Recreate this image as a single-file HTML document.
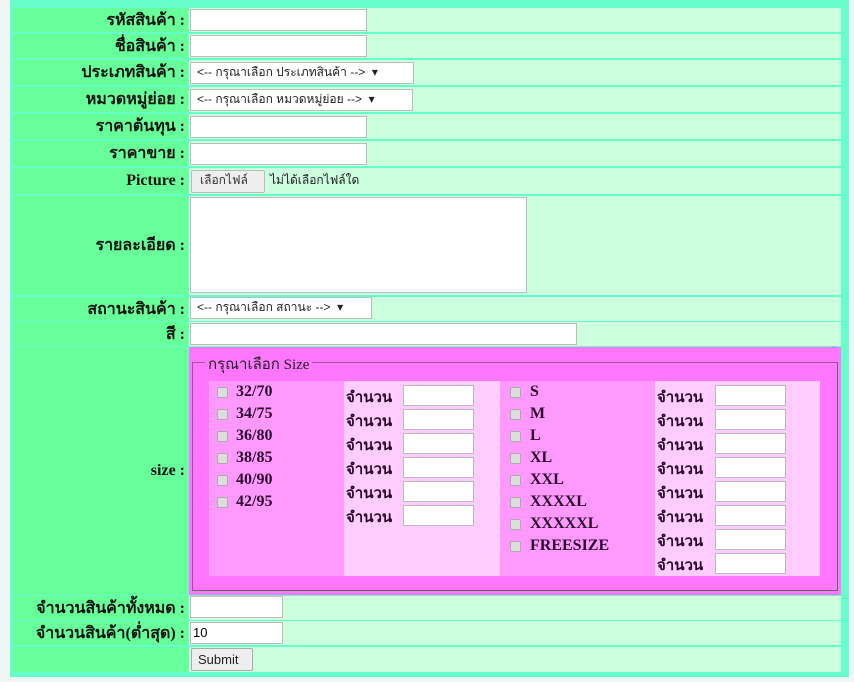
<!DOCTYPE html>
<html><head><meta charset="utf-8"><style>
*{box-sizing:border-box;margin:0;padding:0}
body{width:854px;height:682px;background:#eef6f6;position:relative;overflow:hidden;font-family:"Liberation Serif",serif;}
#outer{position:absolute;left:10px;top:0;width:839px;height:677px;background:#66ffcc}
.l{position:absolute;left:13px;width:175px;background:#66ff99;text-align:right;font-weight:bold;font-size:16px;color:#111;padding-right:3px;display:flex;align-items:center;justify-content:flex-end;white-space:nowrap}
.v{position:absolute;left:189px;width:652px;background:#ccffdd}
.in{position:absolute;background:#fff;border:1px solid #bbb;height:22px}
.sel{position:absolute;background:#fff;border:1px solid #bbb;height:22px;font-family:"Liberation Sans",sans-serif;font-size:12px;line-height:18px;color:#222;padding:0 6px;white-space:nowrap}
.t{position:absolute;font-size:16px;font-weight:bold;color:#2a0a2a;white-space:nowrap}
.j{font-size:15px}
.cb{position:absolute;width:11px;height:11px;background:#ddd;border:1px solid #aaa;border-radius:2px}
.s{position:absolute;background:#fff;border:1px solid #bbb;width:71px;height:21px}
</style></head><body>
<div id="outer"></div>

<div class="l" style="top:8px;height:24px">รหัสสินค้า :</div><div class="v" style="top:8px;height:24px"></div>
<div class="in" style="left:190px;top:9px;width:177px"></div>
<div class="l" style="top:34px;height:24px">ชื่อสินค้า :</div><div class="v" style="top:34px;height:24px"></div>
<div class="in" style="left:190px;top:35px;width:177px"></div>
<div class="l" style="top:60px;height:25px">ประเภทสินค้า :</div><div class="v" style="top:60px;height:25px"></div>
<div class="sel" style="left:190px;top:62px;width:224px">&lt;-- กรุณาเลือก ประเภทสินค้า --&gt; &nbsp;▾</div>
<div class="l" style="top:87px;height:25px">หมวดหมู่ย่อย :</div><div class="v" style="top:87px;height:25px"></div>
<div class="sel" style="left:190px;top:89px;width:223px">&lt;-- กรุณาเลือก หมวดหมู่ย่อย --&gt; &nbsp;▾</div>
<div class="l" style="top:114px;height:25px">ราคาต้นทุน :</div><div class="v" style="top:114px;height:25px"></div>
<div class="in" style="left:190px;top:116px;width:177px"></div>
<div class="l" style="top:141px;height:25px">ราคาขาย :</div><div class="v" style="top:141px;height:25px"></div>
<div class="in" style="left:190px;top:143px;width:177px"></div>
<div class="l" style="top:168px;height:26px">Picture :</div><div class="v" style="top:168px;height:26px"></div>
<div style="position:absolute;left:191px;top:170px;width:74px;height:23px;background:#eee;border:1px solid #bbb;border-radius:2px;font-family:'Liberation Sans',sans-serif;font-size:12px;line-height:19px;padding:0 8px;color:#333">เลือกไฟล์</div>
<div style="position:absolute;left:270px;top:171px;font-family:'Liberation Sans',sans-serif;font-size:12px;line-height:19px;color:#222">ไม่ได้เลือกไฟล์ใด</div>
<div class="l" style="top:196px;height:99px">รายละเอียด :</div><div class="v" style="top:196px;height:99px"></div>
<div class="in" style="left:190px;top:197px;width:337px;height:96px"></div>
<div class="l" style="top:297px;height:24px">สถานะสินค้า :</div><div class="v" style="top:297px;height:24px"></div>
<div class="sel" style="left:190px;top:297px;width:182px">&lt;-- กรุณาเลือก สถานะ --&gt; &nbsp;▾</div>
<div class="l" style="top:322px;height:24px">สี :</div><div class="v" style="top:322px;height:24px"></div>
<div class="in" style="left:190px;top:323px;width:387px"></div>
<div class="l" style="top:347px;height:248px">size :</div>
<div class="v" style="top:347px;height:248px;background:#ff77ff"></div>
<div style="position:absolute;left:192px;top:362px;width:646px;height:229px;border:1px solid #a050a0;border-right-color:#666;border-bottom-color:#666"></div>
<div style="position:absolute;left:205px;top:352px;padding:0 3px;background:#ff77ff;font-size:15px;color:#222">กรุณาเลือก Size</div>
<div style="position:absolute;left:209px;top:381px;width:611px;height:195px;background:#ff99ff"></div>
<div style="position:absolute;left:344px;top:381px;width:156px;height:195px;background:#ffccff"></div>
<div style="position:absolute;left:655px;top:381px;width:165px;height:195px;background:#ffccff"></div>

<div class="cb" style="left:217px;top:387px"></div><div class="t" style="left:236px;top:383px">32/70</div>
<div class="cb" style="left:217px;top:409px"></div><div class="t" style="left:236px;top:405px">34/75</div>
<div class="cb" style="left:217px;top:431px"></div><div class="t" style="left:236px;top:427px">36/80</div>
<div class="cb" style="left:217px;top:453px"></div><div class="t" style="left:236px;top:449px">38/85</div>
<div class="cb" style="left:217px;top:475px"></div><div class="t" style="left:236px;top:471px">40/90</div>
<div class="cb" style="left:217px;top:497px"></div><div class="t" style="left:236px;top:493px">42/95</div>

<div class="t j" style="left:346px;top:385px">จำนวน</div><div class="s" style="left:403px;top:385px"></div>
<div class="t j" style="left:346px;top:409px">จำนวน</div><div class="s" style="left:403px;top:409px"></div>
<div class="t j" style="left:346px;top:433px">จำนวน</div><div class="s" style="left:403px;top:433px"></div>
<div class="t j" style="left:346px;top:457px">จำนวน</div><div class="s" style="left:403px;top:457px"></div>
<div class="t j" style="left:346px;top:481px">จำนวน</div><div class="s" style="left:403px;top:481px"></div>
<div class="t j" style="left:346px;top:505px">จำนวน</div><div class="s" style="left:403px;top:505px"></div>

<div class="cb" style="left:510px;top:387px"></div><div class="t" style="left:530px;top:383px">S</div>
<div class="cb" style="left:510px;top:409px"></div><div class="t" style="left:530px;top:405px">M</div>
<div class="cb" style="left:510px;top:431px"></div><div class="t" style="left:530px;top:427px">L</div>
<div class="cb" style="left:510px;top:453px"></div><div class="t" style="left:530px;top:449px">XL</div>
<div class="cb" style="left:510px;top:475px"></div><div class="t" style="left:530px;top:471px">XXL</div>
<div class="cb" style="left:510px;top:497px"></div><div class="t" style="left:530px;top:493px">XXXXL</div>
<div class="cb" style="left:510px;top:519px"></div><div class="t" style="left:530px;top:515px">XXXXXL</div>
<div class="cb" style="left:510px;top:541px"></div><div class="t" style="left:530px;top:537px">FREESIZE</div>

<div class="t j" style="left:657px;top:385px">จำนวน</div><div class="s" style="left:715px;top:385px"></div>
<div class="t j" style="left:657px;top:409px">จำนวน</div><div class="s" style="left:715px;top:409px"></div>
<div class="t j" style="left:657px;top:433px">จำนวน</div><div class="s" style="left:715px;top:433px"></div>
<div class="t j" style="left:657px;top:457px">จำนวน</div><div class="s" style="left:715px;top:457px"></div>
<div class="t j" style="left:657px;top:481px">จำนวน</div><div class="s" style="left:715px;top:481px"></div>
<div class="t j" style="left:657px;top:505px">จำนวน</div><div class="s" style="left:715px;top:505px"></div>
<div class="t j" style="left:657px;top:529px">จำนวน</div><div class="s" style="left:715px;top:529px"></div>
<div class="t j" style="left:657px;top:553px">จำนวน</div><div class="s" style="left:715px;top:553px"></div>

<div class="l" style="top:596px;height:24px">จำนวนสินค้าทั้งหมด :</div><div class="v" style="top:596px;height:24px"></div>
<div class="in" style="left:190px;top:596px;width:93px"></div>
<div class="l" style="top:621px;height:24px">จำนวนสินค้า(ต่ำสุด) :</div><div class="v" style="top:621px;height:24px"></div>
<div class="in" style="left:190px;top:622px;width:93px;font-family:'Liberation Sans',sans-serif;font-size:13px;padding:2px 2px">10</div>
<div class="l" style="top:647px;height:25px"></div><div class="v" style="top:647px;height:25px"></div>
<div style="position:absolute;left:191px;top:648px;width:62px;height:23px;background:#eee;border:1px solid #aaa;border-radius:2px;font-family:'Liberation Sans',sans-serif;font-size:13px;padding:3px 6px;color:#222">Submit</div>
</body></html>
